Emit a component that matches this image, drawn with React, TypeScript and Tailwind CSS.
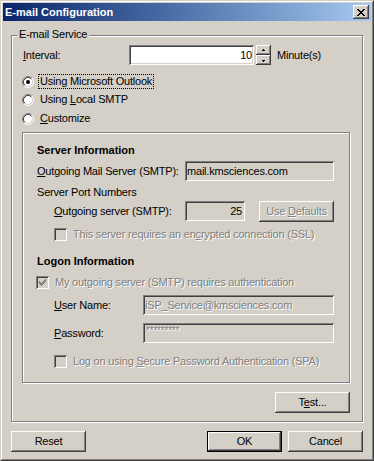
import type { ReactNode } from 'react';

// Windows 2000 look: face #D4D0C8, shadow #808080, dark shadow #404040
const raised =
  'bg-[#D4D0C8] shadow-[inset_-1px_-1px_0_#404040,inset_1px_1px_0_#fff,inset_-2px_-2px_0_#808080,inset_2px_2px_0_#D4D0C8]';
const sunken =
  'shadow-[inset_1px_1px_0_#808080,inset_-1px_-1px_0_#fff,inset_2px_2px_0_#404040,inset_-2px_-2px_0_#D4D0C8]';
const etched = 'border border-[#808080] shadow-[inset_1px_1px_0_#fff,1px_1px_0_#fff]';
const dim = 'text-[#808080] [text-shadow:1px_1px_0_#fff]';

const U = ({ children }: { children: ReactNode }) => <span className="underline">{children}</span>;

const CloseGlyph = () => {
  const rows = [
    [0, 1, 6, 7],
    [1, 2, 5, 6],
    [2, 3, 4, 5],
    [3, 4],
    [2, 3, 4, 5],
    [1, 2, 5, 6],
    [0, 1, 6, 7],
  ];
  return (
    <svg width="8" height="7" viewBox="0 0 8 7" shapeRendering="crispEdges">
      {rows.map((cols, y) => cols.map((x) => <rect key={`${x}-${y}`} x={x} y={y} width="1" height="1" fill="#000" />))}
    </svg>
  );
};

const Arrow = ({ up }: { up?: boolean }) => (
  <svg width="5" height="3" viewBox="0 0 5 3" shapeRendering="crispEdges">
    {up ? (
      <>
        <rect x="2" y="0" width="1" height="1" fill="#000" />
        <rect x="1" y="1" width="3" height="1" fill="#000" />
      </>
    ) : (
      <>
        <rect x="1" y="1" width="3" height="1" fill="#000" />
        <rect x="2" y="2" width="1" height="1" fill="#000" />
      </>
    )}
  </svg>
);

const Radio = ({ checked }: { checked?: boolean }) => (
  <svg width="12" height="12" viewBox="0 0 12 12" className="shrink-0">
    <circle cx="6" cy="6" r="4.5" fill="#fff" />
    <path d="M2.11 9.89 A5.5 5.5 0 0 1 9.89 2.11" fill="none" stroke="#808080" />
    <path d="M9.89 2.11 A5.5 5.5 0 0 1 2.11 9.89" fill="none" stroke="#fff" />
    <path d="M2.82 9.18 A4.5 4.5 0 0 1 9.18 2.82" fill="none" stroke="#404040" />
    <path d="M9.18 2.82 A4.5 4.5 0 0 1 2.82 9.18" fill="none" stroke="#D4D0C8" />
    {checked && <circle cx="6" cy="6" r="2" fill="#000" />}
  </svg>
);

const Check = ({ checked }: { checked?: boolean }) => (
  <div className={`relative h-[13px] w-[13px] shrink-0 bg-[#D4D0C8] ${sunken}`}>
    {checked && (
      <svg width="7" height="7" viewBox="0 0 7 7" shapeRendering="crispEdges" className="absolute left-[3px] top-[3px]">
        {[2, 3, 4, 3, 2, 1, 0].map((y, x) => (
          <rect key={x} x={x} y={y} width="1" height="3" fill="#808080" />
        ))}
      </svg>
    )}
  </div>
);

const Btn = ({ children, className = '' }: { children: ReactNode; className?: string }) => (
  <button className={`flex h-[21px] w-[75px] items-center justify-center ${raised} ${className}`}>
    <span>{children}</span>
  </button>
);

export default function App() {
  return (
    <div className="h-[461px] w-[374px] border border-[#D4D0C8] border-r-[#404040] border-b-[#404040] bg-[#D4D0C8] font-['Liberation_Sans',Arial,sans-serif] text-[11px] leading-[13px] tracking-[-0.2px] text-black">
      <div className="flex h-full flex-col border border-white border-r-[#808080] border-b-[#808080] p-px">
        {/* title bar */}
        <div className="flex h-[18px] items-center justify-between bg-linear-to-r from-[#0A246A] to-[#A6CAF0] px-[2px]">
          <span className="font-bold tracking-normal text-white">E-mail Configuration</span>
          <button className={`flex h-[14px] w-[16px] items-center justify-center ${raised}`}>
            <CloseGlyph />
          </button>
        </div>

        <div className="pl-[8px] pt-[14px]">
          {/* E-mail Service group */}
          <div className={`relative h-[387px] w-[352px] ${etched}`}>
            <span className="absolute -top-[8px] left-[5px] bg-[#D4D0C8] px-[2px]">E-mail Service</span>

            <div className="mt-[9px] flex h-[20px] items-center pl-[11px]">
              <span className="w-[106px]">
                <U>I</U>nterval:
              </span>
              <div className={`flex h-[20px] w-[125px] items-center justify-end bg-white pr-[2px] ${sunken}`}>10</div>
              <div className="ml-[2px] flex h-[20px] w-[15px] flex-col">
                <div className={`flex h-[10px] items-center justify-center ${raised}`}>
                  <Arrow up />
                </div>
                <div className={`flex h-[10px] items-center justify-center ${raised}`}>
                  <Arrow />
                </div>
              </div>
              <span className="ml-[6px]">Minute(s)</span>
            </div>

            <div className="pl-[10px]">
              <div className="mt-[8px] flex h-[17px] items-center">
                <Radio checked />
                <span className="ml-[4px] border border-dotted border-black px-px">Using Microsoft Outlook</span>
              </div>
              <div className="mt-px flex h-[17px] items-center">
                <Radio />
                <span className="ml-[4px] px-[2px]">
                  Using <U>L</U>ocal SMTP
                </span>
              </div>
              <div className="mt-[2px] flex h-[17px] items-center">
                <Radio />
                <span className="ml-[4px] px-[2px]">
                  <U>C</U>ustomize
                </span>
              </div>
            </div>

            {/* server settings box */}
            <div className={`ml-[10px] mt-[5px] h-[251px] w-[328px] ${etched}`}>
              <div className="mt-[11px] pl-[14px] font-bold tracking-normal">Server Information</div>

              <div className="mt-[4px] flex h-[20px] items-center pl-[14px]">
                <span className="w-[148px]">
                  <U>O</U>utgoing Mail Server (SMTP):
                </span>
                <div className={`flex h-[20px] w-[149px] items-center pl-[2px] ${sunken}`}>mail.kmsciences.com</div>
              </div>

              <div className="mt-[5px] pl-[14px]">Server Port Numbers</div>

              <div className="mt-[2px] flex h-[20px] items-center pl-[31px]">
                <span className="w-[131px]">
                  <U>O</U>utgoing server (SMTP):
                </span>
                <div className={`flex h-[20px] w-[60px] items-center justify-end pr-[3px] ${sunken}`}>25</div>
                <Btn className={`ml-[14px] h-[20px] ${dim}`}>
                  Use <U>D</U>efaults
                </Btn>
              </div>

              <div className="mt-[7px] flex h-[13px] items-center pl-[31px]">
                <Check />
                <span className={`ml-[6px] ${dim}`}>
                  This server requires an en<U>c</U>rypted connection (SSL)
                </span>
              </div>

              <div className="mt-[14px] pl-[14px] font-bold tracking-normal">Logon Information</div>

              <div className="mt-[8px] flex h-[13px] items-center pl-[13px]">
                <Check checked />
                <span className={`ml-[6px] ${dim}`}>My outgoing server (SMTP) requires authentication</span>
              </div>

              <div className="mt-[6px] flex h-[20px] items-center pl-[31px]">
                <span className="w-[89px]">
                  <U>U</U>ser Name:
                </span>
                <div className={`flex h-[20px] w-[191px] items-center pl-[2px] ${sunken} ${dim}`}>
                  iSP_Service@kmsciences.com
                </div>
              </div>

              <div className="mt-[8px] flex h-[20px] items-center pl-[31px]">
                <span className="w-[89px]">
                  <U>P</U>assword:
                </span>
                <div className={`flex h-[20px] w-[191px] items-start pl-[3px] pt-[3px] text-[10px] leading-[10px] ${sunken} ${dim}`}>
                  *********
                </div>
              </div>

              <div className="mt-[12px] flex h-[13px] items-center pl-[31px]">
                <Check />
                <span className={`ml-[6px] ${dim}`}>
                  Log on using <U>S</U>ecure Password Authentication (SPA)
                </span>
              </div>
            </div>

            <div className="ml-[10px] mt-[9px] flex w-[328px] justify-end">
              <Btn>
                T<U>e</U>st...
              </Btn>
            </div>
          </div>

          {/* dialog buttons */}
          <div className="mt-[9px] flex w-[352px] items-center">
            <Btn>Reset</Btn>
            <div className="flex-1" />
            <div className="flex h-[21px] w-[75px] border border-black">
              <button className={`flex h-full w-full items-center justify-center ${raised}`}>OK</button>
            </div>
            <Btn className="ml-[6px]">Cancel</Btn>
          </div>
        </div>
      </div>
    </div>
  );
}
